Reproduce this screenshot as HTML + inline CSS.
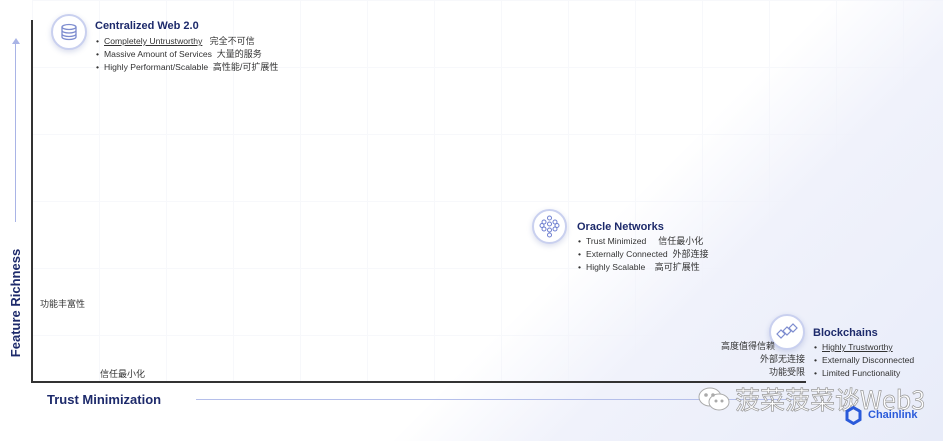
<!DOCTYPE html>
<html><head><meta charset="utf-8"><style>
body{margin:0;width:943px;height:441px;overflow:hidden;position:relative;background:#fff;font-family:"Liberation Sans","Noto Sans CJK SC",sans-serif;color:#222}
.a{position:absolute;white-space:nowrap}
.grid{position:absolute;left:32px;top:0;width:911px;height:382px;background-image:linear-gradient(#f7f8fb 1px,transparent 1px),linear-gradient(90deg,#f7f8fb 1px,transparent 1px);background-size:67px 67px}
.bg{position:absolute;left:0;top:0;width:943px;height:441px;background:linear-gradient(135deg,transparent 60%,#f0f2fb 72%,#e8ecf9 100%)}
.circ{position:absolute;border-radius:50%;background:#fff;border:2px solid #c9d0ef;box-shadow:0 2px 6px rgba(60,80,160,.2)}
.t{font-weight:bold;font-size:11px;color:#1d2a6b}
.li{font-size:8.6px;color:#333;line-height:13px}
.li span{display:inline-block;width:8px}
.cn{font-size:9px;color:#333}
</style></head><body>
<div class="grid"></div>
<div class="bg"></div>
<div class="a" style="left:31px;top:20px;width:2px;height:363px;background:#333"></div>
<div class="a" style="left:31px;top:381px;width:775px;height:2px;background:#333"></div>
<div class="a" style="left:15px;top:42px;width:1px;height:180px;background:#a9b4e6"></div>
<div class="a" style="left:12px;top:38px;width:0;height:0;border-left:4px solid transparent;border-right:4px solid transparent;border-bottom:6px solid #a9b4e6"></div>
<div class="a" style="left:196px;top:399px;width:600px;height:1px;background:#b5bfea"></div>
<div class="a" style="left:-39px;top:295px;width:110px;height:16px;text-align:center;transform:rotate(-90deg);font-weight:bold;font-size:13px;color:#1d2a6b">Feature Richness</div>
<div class="a" style="left:47px;top:392px;font-weight:bold;font-size:13px;color:#1d2a6b">Trust Minimization</div>
<div class="a cn" style="left:40px;top:297px">功能丰富性</div>
<div class="a cn" style="left:100px;top:367px">信任最小化</div>

<div class="circ" style="left:51px;top:14px;width:32px;height:32px"><svg width="32" height="32" viewBox="0 0 32 32" fill="none" stroke="#7d8ccf" stroke-width="1.3"><ellipse cx="16" cy="11" rx="7" ry="2.5"/><path d="M9 11v10c0 1.4 3 2.5 7 2.5s7-1.1 7-2.5V11M9 14.5c0 1.4 3 2.5 7 2.5s7-1.1 7-2.5M9 18c0 1.4 3 2.5 7 2.5s7-1.1 7-2.5"/></svg></div>
<div class="a t" style="left:95px;top:20px">Centralized Web 2.0</div>
<div class="a li" style="left:96px;top:35px"><span>•</span><u>Completely Untrustworthy</u>&nbsp;&nbsp;&nbsp;<span class="cn" style="width:auto">完全不可信</span><br><span>•</span>Massive Amount of Services&nbsp;&nbsp;<span class="cn" style="width:auto">大量的服务</span><br><span>•</span>Highly Performant/Scalable&nbsp;&nbsp;<span class="cn" style="width:auto">高性能/可扩展性</span></div>

<div class="circ" style="left:532px;top:209px;width:31px;height:31px"><svg width="31" height="31" viewBox="0 0 31 31" fill="none" stroke="#6e7fd0" stroke-width="1"><circle cx="15.5" cy="7" r="2"/><circle cx="10" cy="11" r="2"/><circle cx="21" cy="11" r="2"/><circle cx="15.5" cy="13" r="2"/><circle cx="10" cy="18" r="2"/><circle cx="21" cy="18" r="2"/><circle cx="15.5" cy="19" r="2"/><circle cx="15.5" cy="24" r="2"/><circle cx="8" cy="14.5" r="2"/><circle cx="23" cy="14.5" r="2"/></svg></div>
<div class="a t" style="left:577px;top:221px">Oracle Networks</div>
<div class="a li" style="left:578px;top:235px"><span>•</span>Trust Minimized&nbsp;&nbsp;&nbsp;&nbsp;&nbsp;<span class="cn" style="width:auto">信任最小化</span><br><span>•</span>Externally Connected&nbsp;&nbsp;<span class="cn" style="width:auto">外部连接</span><br><span>•</span>Highly Scalable&nbsp;&nbsp;&nbsp;&nbsp;<span class="cn" style="width:auto">高可扩展性</span></div>

<div class="circ" style="left:769px;top:314px;width:32px;height:32px"><svg width="32" height="32" viewBox="0 0 32 32" fill="none" stroke="#7d8ccf" stroke-width="1.2"><path d="M6 18l4-4 4 4-4 4zM12 15l4-4 4 4-4 4zM18 12l4-4 4 4-4 4z"/></svg></div>
<div class="a t" style="left:813px;top:327px">Blockchains</div>
<div class="a li" style="left:814px;top:341px"><span>•</span><u>Highly Trustworthy</u><br><span>•</span>Externally Disconnected<br><span>•</span>Limited Functionality</div>
<div class="a cn" style="left:720px;top:340px;line-height:13px;text-align:right;width:85px"><div style="margin-right:30px">高度值得信赖</div><div>外部无连接</div><div>功能受限</div></div>

<div class="a" style="left:697px;top:386px;width:34px;height:26px"><svg width="34" height="26" viewBox="0 0 34 26" fill="#fff" stroke="#aaa" stroke-width="1"><ellipse cx="13" cy="11" rx="11" ry="9"/><ellipse cx="22" cy="16" rx="10" ry="8"/><circle cx="9" cy="9" r="1.3" fill="#aaa"/><circle cx="16" cy="9" r="1.3" fill="#aaa"/><circle cx="19" cy="15" r="1" fill="#aaa"/><circle cx="25" cy="15" r="1" fill="#aaa"/></svg></div>
<div class="a" style="left:735px;top:381px;font-size:25px;color:#fff;-webkit-text-stroke:0.7px #999;font-family:'Noto Sans CJK SC',sans-serif">菠菜菠菜谈Web3</div>
<div class="a" style="left:845px;top:406px;width:17px;height:19px"><svg width="17" height="19" viewBox="0 0 17 19"><path d="M8.5 1.5l6.5 3.8v8.4l-6.5 3.8-6.5-3.8V5.3z" fill="none" stroke="#2a5ada" stroke-width="3"/></svg></div>
<div class="a" style="left:868px;top:409px;font-weight:bold;font-size:11px;color:#2a5ada">Chainlink</div>
</body></html>
